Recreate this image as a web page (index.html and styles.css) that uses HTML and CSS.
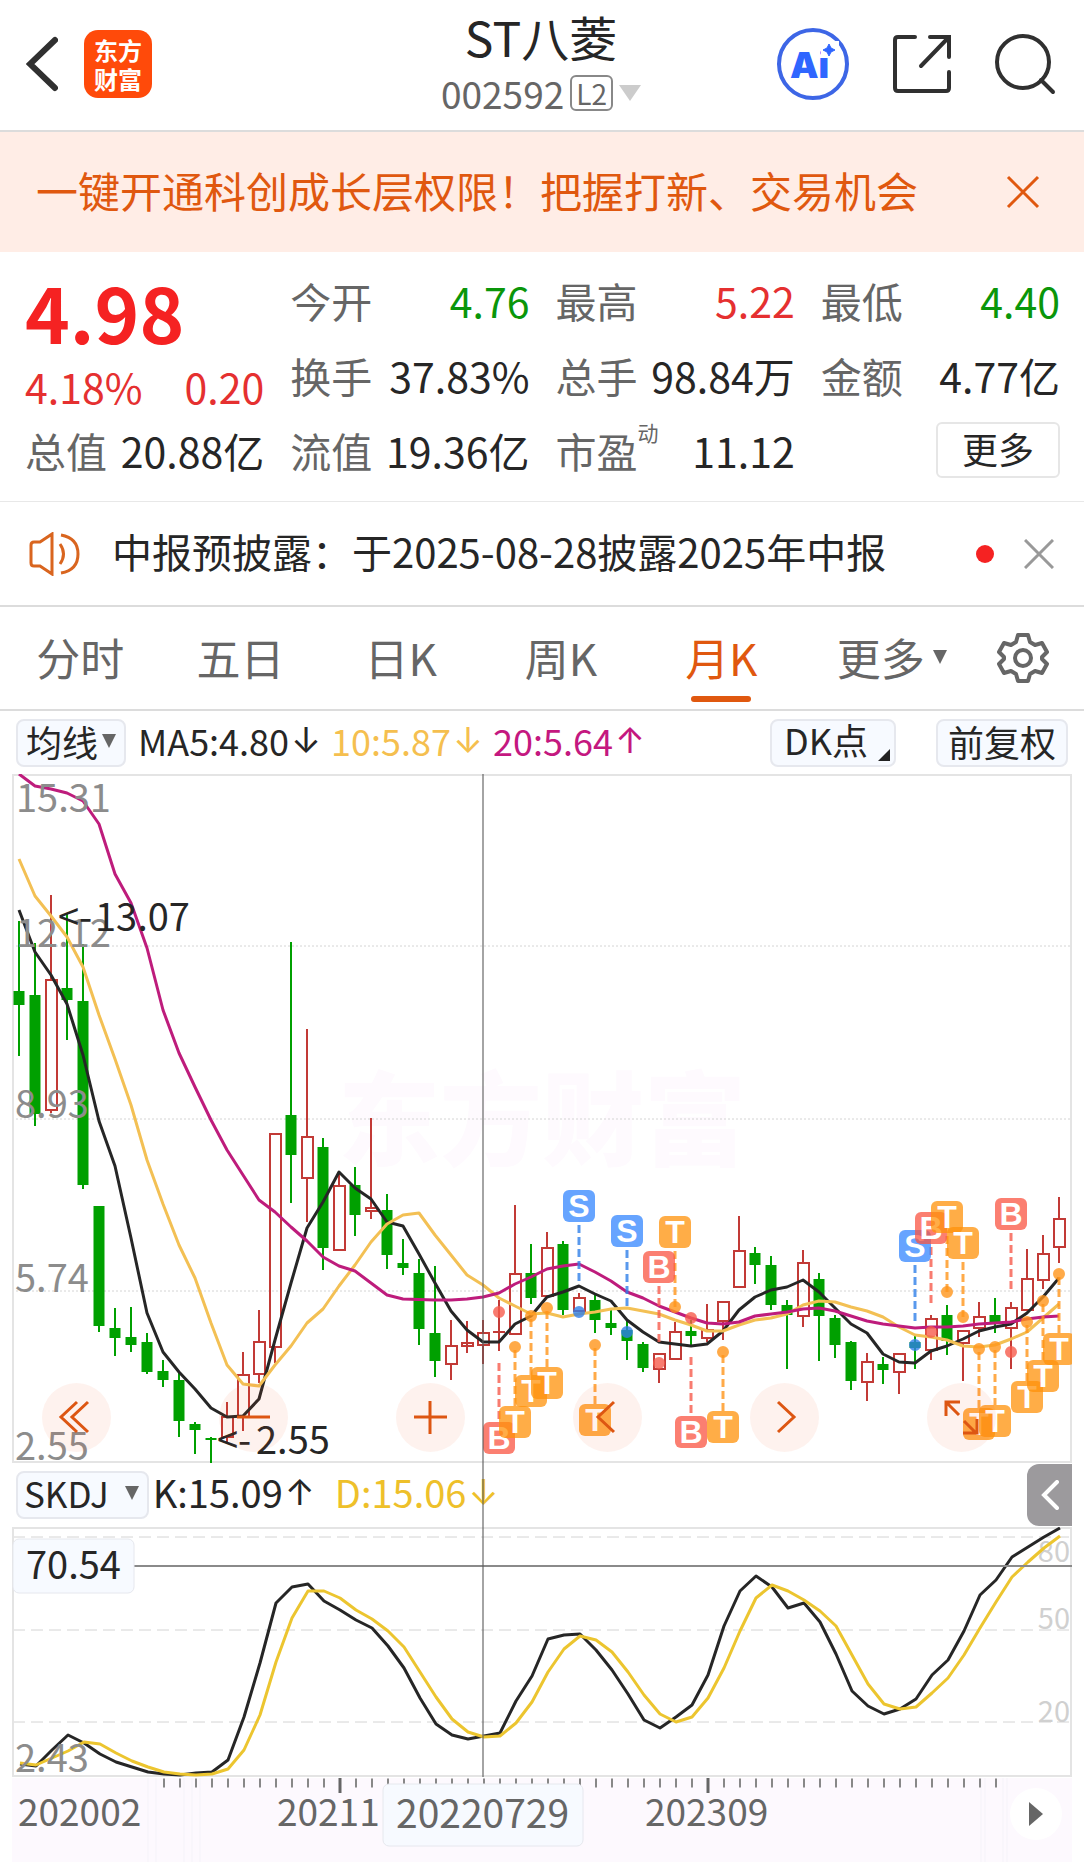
FILE: index.html
```html
<!DOCTYPE html>
<html lang="zh-CN">
<head>
<meta charset="utf-8">
<meta name="viewport" content="width=device-width, initial-scale=1">
<title>ST八菱 002592</title>
<link rel="stylesheet" href="styles.css">
</head>
<body>
<header class="top">
  <div class="top-left">
    <button class="icon-btn" aria-label="返回"><svg width="32" height="56" viewBox="0 0 32 56"><path class="ink" d="M29 4 4 28l25 24"/></svg></button>
    <a class="logo" href="#"><span>东方</span><span>财富</span></a>
  </div>
  <div class="top-title">
    <h1>ST八菱</h1>
    <p class="code">002592<span class="level">L2</span><svg width="22" height="16" viewBox="0 0 22 16"><path fill="#ccc" d="M0 0h22L11 16z"/></svg></p>
  </div>
  <div class="top-right">
    <button class="icon-btn" aria-label="Ai">
      <svg width="74" height="74" viewBox="0 0 74 74"><circle cx="37" cy="37" r="34" fill="none" stroke="#3d66e6" stroke-width="4"/><text class="ai" x="14" y="51">Ai</text><path fill="#fff" d="M45 14h18v16H45z"/><path d="M53 17l2 4 4 2-4 2-2 4-2-4-4-2 4-2z" fill="#2f66ff" stroke="#2f66ff" stroke-width="1"/></svg>
    </button>
    <button class="icon-btn" aria-label="分享"><svg width="60" height="60" viewBox="0 0 60 60"><path class="ink thin" d="M23 3H6q-3 0-3 3v48q0 3 3 3h48q3 0 3-3V38M38 3h19v20M56 4 29 32"/></svg></button>
    <button class="icon-btn" aria-label="搜索"><svg width="62" height="62" viewBox="0 0 62 62"><circle class="ink thin" cx="29" cy="29" r="26"/><path class="ink thin" d="M47 47l12 12"/></svg></button>
  </div>
</header>

<section class="banner">
  <a href="#">一键开通科创成长层权限！把握打新、交易机会</a>
  <button class="icon-btn" aria-label="关闭"><svg width="34" height="34" viewBox="0 0 34 34"><path d="M2 2l30 30M32 2 2 32" stroke="#e0580f" stroke-width="3"/></svg></button>
</section>

<section class="quote">
  <div class="price">
    <strong>4.98</strong>
    <div class="change"><span>4.18%</span><span>0.20</span></div>
  </div>
  <dl class="cell"><dt>今开</dt><dd class="down">4.76</dd></dl>
  <dl class="cell"><dt>最高</dt><dd class="up">5.22</dd></dl>
  <dl class="cell"><dt>最低</dt><dd class="down">4.40</dd></dl>
  <dl class="cell"><dt>换手</dt><dd>37.83%</dd></dl>
  <dl class="cell"><dt>总手</dt><dd>98.84万</dd></dl>
  <dl class="cell"><dt>金额</dt><dd>4.77亿</dd></dl>
  <dl class="cell"><dt>总值</dt><dd>20.88亿</dd></dl>
  <dl class="cell"><dt>流值</dt><dd>19.36亿</dd></dl>
  <dl class="cell"><dt>市盈<sup>动</sup></dt><dd>11.12</dd></dl>
  <button class="more">更多</button>
</section>

<section class="notice">
  <svg width="52" height="44" viewBox="0 0 52 44" fill="none" stroke="#d9651f" stroke-width="3"><path d="M12 10H6q-3 0-3 3v18q0 3 3 3h6l12 8V2zM32 12q7 10 0 20M33 3q17 3 17 19T33 41"/></svg>
  <a href="#">中报预披露：于2025-08-28披露2025年中报</a>
  <i class="dot"></i>
  <button class="icon-btn" aria-label="关闭"><svg width="30" height="30" viewBox="0 0 30 30"><path d="M1 1l28 28M29 1 1 29" stroke="#999" stroke-width="3"/></svg></button>
</section>

<nav class="tabs">
  <a href="#">分时</a>
  <a href="#">五日</a>
  <a href="#">日K</a>
  <a href="#">周K</a>
  <a href="#" class="active">月K</a>
  <a href="#">更多<svg width="14" height="14" viewBox="0 0 14 14"><path fill="#666" d="M0 0h14L7 14z"/></svg></a>
  <button class="icon-btn" aria-label="设置"><svg width="52" height="52" viewBox="0 0 52 52" fill="none" stroke="#666" stroke-width="4" stroke-linejoin="round"><path d="M21 3h10l2 7 5 3 7-2 5 9-5 5v2l5 5-5 9-7-2-5 3-2 7H21l-2-7-5-3-7 2-5-9 5-5v-2l-5-5 5-9 7 2 5-3z"/><circle cx="26" cy="26" r="8"/></svg></button>
</nav>

<main class="chart">
  <div class="bar">
    <button class="chip">均线<svg width="14" height="14" viewBox="0 0 14 14"><path fill="#666" d="M0 0h14L7 14z"/></svg></button>
    <span class="ma5">MA5:4.80<b>↓</b></span>
    <span class="ma10">10:5.87<b>↓</b></span>
    <span class="ma20">20:5.64<b>↑</b></span>
    <button class="chip corner">DK点<svg width="12" height="12" viewBox="0 0 12 12"><path fill="#222" d="M12 0v12H0z"/></svg></button>
    <button class="chip">前复权</button>
  </div>

  <div class="plots">
    <div class="plot">
      <svg class="graph" viewBox="12 774 1060 689" role="img" aria-label="月K线">
        <text class="watermark" x="338" y="1158">东方财富</text>
        <path class="grid-dot" d="M12 946H1072M12 1119H1072M12 1291H1072"/>
        <path class="frame" d="M13 775H1071V1462H13z"/>

        <path class="wick g" d="M19 921V1056M35 943V1126M67 913V1040M83 944V1189M99 1206V1332M115 1308V1356M131 1307V1352M147 1333V1374M163 1360V1387M179 1372V1437M195 1422V1454M211 1437V1464M291 942V1203M323 1138V1270M355 1167V1236M387 1194V1269M403 1239V1275M419 1259V1345M435 1266V1377M531 1244V1304M563 1241V1315M595 1295V1333M611 1310V1335M627 1320V1360M643 1342V1372M691 1320V1346M755 1247V1284M771 1256V1310M787 1300V1369M819 1273V1361M835 1315V1358M851 1341V1390M883 1357V1384M915 1335V1369M947 1305V1355M995 1298V1333"/>
        <path class="body g" d="M19 991V1005M35 995V1114M67 988V1000M83 1001V1185M99 1206V1326M115 1328V1338M131 1337V1345M147 1342V1372M163 1371V1380M179 1380V1421M195 1424V1430M211 1438V1440M291 1115V1155M323 1147V1248M355 1185V1215M387 1210V1255M403 1263V1268M419 1273V1329M435 1333V1361M531 1273V1298M563 1244V1310M595 1300V1320M611 1323V1328M627 1330V1341M643 1344V1368M691 1331V1336M755 1253V1265M771 1265V1305M787 1305V1315M819 1279V1316M835 1318V1345M851 1342V1381M883 1364V1370M915 1342V1348M947 1315V1341M995 1315V1323"/>
        <path class="wick r" d="M51 895V979M51 1110V1113M227 1402V1416M227 1437V1442M243 1352V1374M243 1417V1431M259 1310V1341M259 1374V1383M275 1347V1363M307 1029V1136M307 1179V1222M339 1174V1185M371 1118V1207M371 1212V1219M451 1320V1345M451 1364V1380M467 1321V1353M483 1320V1332M483 1345V1364M499 1300V1351M493 1332H505M515 1205V1273M547 1232V1247M579 1293V1297M659 1369V1383M675 1322V1331M707 1304V1329M707 1338V1342M723 1322V1340M739 1216V1250M803 1250V1262M803 1317V1327M867 1353V1361M867 1382V1401M899 1372V1394M931 1315V1318M931 1350V1360M963 1343V1381M979 1302V1316M979 1328V1337M1011 1302V1307M1011 1328V1369M1027 1249V1278M1043 1235V1253M1043 1280V1289M1059 1197V1218M1059 1247V1263"/>
        <path class="box r" d="M46 980h11v130h-11zM222 1417h11v20h-11zM238 1375h11v42h-11zM254 1342h11v32h-11zM270 1134h11v213h-11zM302 1137h11v41h-11zM334 1186h11v64h-11zM366 1208h11v3h-11zM446 1346h11v18h-11zM462 1343h11v3h-11zM478 1333h11v12h-11zM510 1274h11v60h-11zM542 1248h11v48h-11zM574 1298h11v13h-11zM654 1354h11v15h-11zM670 1332h11v27h-11zM702 1330h11v8h-11zM718 1302h11v19h-11zM734 1251h11v36h-11zM798 1263h11v53h-11zM862 1362h11v20h-11zM894 1354h11v18h-11zM926 1319h11v31h-11zM958 1331h11v12h-11zM974 1317h11v11h-11zM1006 1308h11v20h-11zM1022 1279h11v31h-11zM1038 1254h11v26h-11zM1054 1219h11v28h-11z"/>

        <polyline class="line k" points="19,910 35,952 51,975 67,1004 83,1055 99,1121 115,1166 131,1238 147,1313 163,1352 179,1372 195,1389 211,1408 227,1417 243,1416 259,1399 275,1340 291,1283 307,1228 323,1202 339,1172 355,1188 371,1199 387,1222 403,1226 419,1254 435,1283 451,1311 467,1330 483,1342 499,1342 515,1324 531,1316 547,1297 563,1292 579,1286 595,1294 611,1301 627,1320 643,1332 659,1342 675,1344 691,1346 707,1344 723,1331 739,1310 755,1297 771,1290 787,1287 803,1280 819,1292 835,1308 851,1324 867,1333 883,1354 899,1362 915,1363 931,1351 947,1346 963,1339 979,1331 995,1327 1011,1324 1027,1313 1043,1297 1059,1278"/>
        <polyline class="line y" points="19,859 35,896 51,916 67,937 83,967 99,1015 115,1059 131,1105 147,1160 163,1204 179,1245 195,1278 211,1323 227,1365 243,1384 259,1386 275,1365 291,1346 307,1323 323,1309 339,1286 355,1265 371,1242 387,1224 403,1215 419,1213 435,1235 451,1255 467,1275 483,1285 499,1298 515,1306 531,1314 547,1313 563,1317 579,1314 595,1312 611,1309 627,1308 643,1311 659,1314 675,1320 691,1325 707,1331 723,1331 739,1325 755,1320 771,1318 787,1314 803,1305 819,1301 835,1302 851,1307 867,1311 883,1317 899,1327 915,1335 931,1337 947,1340 963,1346 979,1347 995,1345 1011,1339 1027,1332 1043,1318 1059,1304"/>
        <polyline class="line m" points="19,774 35,786 51,789 67,793 83,801 99,824 115,874 131,903 147,948 163,1010 179,1053 195,1087 211,1120 227,1150 243,1175 259,1200 275,1212 291,1227 307,1241 323,1257 339,1266 355,1271 371,1283 387,1295 403,1299 435,1300 451,1300 467,1299 483,1297 499,1293 515,1284 531,1277 547,1269 563,1266 579,1264 595,1272 611,1281 627,1292 643,1298 659,1306 675,1312 691,1318 707,1323 723,1324 739,1322 755,1316 771,1314 787,1312 803,1309 819,1308 835,1311 851,1316 867,1321 883,1324 899,1326 915,1328 931,1327 947,1327 963,1326 979,1324 995,1323 1011,1322 1027,1319 1043,1317 1059,1316"/>

        <g class="axis">
          <text x="16" y="812">15.31</text><text x="16" y="947">12.12</text><text x="15" y="1118">8.93</text><text x="15" y="1292">5.74</text><text x="15" y="1460">2.55</text>
        </g>
        <text class="peak" x="58" y="931">&lt;-</text><text class="peak" x="95" y="931">13.07</text>
        <text class="peak" x="217" y="1454">&lt;-</text><text class="peak" x="256" y="1454">2.55</text>

        <path class="lead red" d="M499 1363V1422M659 1286V1342M691 1357V1416M931 1247V1303M1011 1233V1290"/>
        <path class="lead orange" d="M515 1350V1406M531 1319V1375M547 1311V1367M675 1251V1307M595 1348V1404M723 1355V1411M947 1236V1292M963 1262V1317M979 1352V1408M995 1350V1405M1027 1325V1381M1043 1304V1360M1059 1277V1333"/>
        <path class="lead blue" d="M579 1225V1285M627 1250V1306M915 1265V1322"/>
        <path class="pin red" d="M499 1312h0M659 1363h0M691 1318h0M931 1332h0M1011 1352h0"/>
        <path class="pin orange" d="M515 1347h0M531 1316h0M547 1308h0M595 1345h0M675 1307h0M723 1352h0M947 1292h0M963 1317h0M979 1349h0M995 1347h0M1027 1322h0M1043 1301h0M1059 1274h0"/>
        <path class="pin blue" d="M579 1312h0M627 1332h0M915 1345h0"/>

        <g class="mark">
          <g class="b"><rect x="483" y="1422" width="32" height="32" rx="6"/><text x="499" y="1449">B</text></g>
          <g class="t"><rect x="499" y="1406" width="32" height="32" rx="6"/><text x="515" y="1433">T</text></g>
          <g class="t"><rect x="515" y="1375" width="32" height="32" rx="6"/><text x="531" y="1402">T</text></g>
          <g class="t"><rect x="531" y="1367" width="32" height="32" rx="6"/><text x="547" y="1394">T</text></g>
          <g class="s"><rect x="563" y="1190" width="32" height="32" rx="6"/><text x="579" y="1217">S</text></g>
          <g class="t"><rect x="579" y="1404" width="32" height="32" rx="6"/><text x="595" y="1431">T</text></g>
          <g class="s"><rect x="611" y="1215" width="32" height="32" rx="6"/><text x="627" y="1242">S</text></g>
          <g class="b"><rect x="643" y="1251" width="32" height="32" rx="6"/><text x="659" y="1278">B</text></g>
          <g class="t"><rect x="659" y="1216" width="32" height="32" rx="6"/><text x="675" y="1243">T</text></g>
          <g class="b"><rect x="675" y="1416" width="32" height="32" rx="6"/><text x="691" y="1443">B</text></g>
          <g class="t"><rect x="707" y="1411" width="32" height="32" rx="6"/><text x="723" y="1438">T</text></g>
          <g class="s"><rect x="899" y="1230" width="32" height="32" rx="6"/><text x="915" y="1257">S</text></g>
          <g class="b"><rect x="915" y="1212" width="32" height="32" rx="6"/><text x="931" y="1239">B</text></g>
          <g class="t"><rect x="931" y="1201" width="32" height="32" rx="6"/><text x="947" y="1228">T</text></g>
          <g class="t"><rect x="947" y="1227" width="32" height="32" rx="6"/><text x="963" y="1254">T</text></g>
          <g class="t"><rect x="963" y="1408" width="32" height="32" rx="6"/><text x="979" y="1435">T</text></g>
          <g class="t"><rect x="979" y="1405" width="32" height="32" rx="6"/><text x="995" y="1432">T</text></g>
          <g class="b"><rect x="995" y="1198" width="32" height="32" rx="6"/><text x="1011" y="1225">B</text></g>
          <g class="t"><rect x="1011" y="1381" width="32" height="32" rx="6"/><text x="1027" y="1408">T</text></g>
          <g class="t"><rect x="1027" y="1360" width="32" height="32" rx="6"/><text x="1043" y="1387">T</text></g>
          <g class="t"><rect x="1043" y="1333" width="32" height="32" rx="6"/><text x="1059" y="1360">T</text></g>
        </g>
      </svg>
      <div class="controls">
        <button aria-label="最早"><svg viewBox="0 0 69 69"><path d="M35 19 19 34l16 15M46 19 30 34l16 15"/></svg></button>
        <button aria-label="缩小"><svg viewBox="0 0 69 69"><path d="M18 34h33"/></svg></button>
        <button aria-label="放大"><svg viewBox="0 0 69 69"><path d="M18 34h33M34 18v33"/></svg></button>
        <button aria-label="向左"><svg viewBox="0 0 69 69"><path d="M41 19 25 34l16 15"/></svg></button>
        <button aria-label="向右"><svg viewBox="0 0 69 69"><path d="M28 19l16 15-16 15"/></svg></button>
        <button aria-label="全屏"><svg viewBox="0 0 69 69"><path d="M19 33V19h14M20 20l12 12M37 38l12 12M36 50h14V36"/></svg></button>
      </div>
    </div>

    <div class="bar sub">
      <button class="chip wide">SKDJ<svg width="14" height="14" viewBox="0 0 14 14"><path fill="#666" d="M0 0h14L7 14z"/></svg></button>
      <span class="ma5">K:15.09<b>↑</b></span>
      <span class="d">D:15.06<b>↓</b></span>
      <button class="drawer" aria-label="展开"><svg width="18" height="30" viewBox="0 0 18 30"><path d="M16 2 3 15l13 13" fill="none" stroke="#fff" stroke-width="4" stroke-linecap="round"/></svg></button>
    </div>

    <svg class="graph" viewBox="12 1527 1060 250" role="img" aria-label="SKDJ">
      <path class="grid-dash" d="M13 1537H1072M13 1630H1072M13 1722H1072"/>
      <path class="frame" d="M13 1528H1071V1776H13z"/>
      <g class="scale"><text x="1070" y="1562">80</text><text x="1070" y="1629">50</text><text x="1070" y="1722">20</text></g>
      <polyline class="line k" points="20,1764 36,1766 52,1750 68,1735 84,1743 100,1754 116,1762 132,1767 148,1772 164,1774 180,1775 196,1773 212,1772 228,1760 244,1717 260,1663 276,1603 292,1587 308,1584 324,1601 340,1610 356,1620 372,1628 388,1646 404,1668 420,1698 436,1724 452,1735 468,1739 484,1736 500,1733 516,1701 532,1676 548,1639 564,1635 580,1634 596,1650 612,1670 628,1694 644,1720 660,1728 676,1717 692,1705 708,1675 724,1626 740,1591 756,1576 772,1587 788,1608 804,1603 820,1622 836,1654 852,1691 868,1706 884,1714 900,1709 916,1699 932,1675 948,1660 964,1631 980,1595 996,1580 1012,1557 1028,1547 1044,1537 1060,1528"/>
      <polyline class="line d" points="20,1763 36,1765 52,1758 68,1751 84,1742 100,1744 116,1753 132,1761 148,1767 164,1772 180,1774 196,1775 212,1774 228,1769 244,1750 260,1715 276,1662 292,1618 308,1591 324,1591 340,1598 356,1610 372,1619 388,1631 404,1647 420,1672 436,1697 452,1719 468,1732 484,1737 500,1736 516,1723 532,1702 548,1672 564,1649 580,1636 596,1640 612,1652 628,1672 644,1695 660,1714 676,1722 692,1717 708,1698 724,1668 740,1631 756,1598 772,1585 788,1591 804,1600 820,1611 836,1626 852,1655 868,1684 884,1704 900,1709 916,1707 932,1693 948,1678 964,1655 980,1628 996,1602 1012,1577 1028,1562 1044,1548 1060,1536"/>
      <g class="axis"><text x="15" y="1772">2.43</text></g>
      <path d="M134 1566H1072" stroke="#8a8a8a" stroke-width="2"/>
      <rect class="tag" x="13" y="1539" width="121" height="54" rx="6"/>
      <text class="peak" x="26" y="1579">70.54</text>
    </svg>
    <div class="crosshair"></div>
  </div>

  <svg class="graph" viewBox="12 1777 1060 85" role="img" aria-label="日期轴">
    <path fill="#fdf9fe" d="M12 1778H1072V1862H12z"/>
    <path d="M148 1778V1862M156 1778V1862M184 1778V1862M192 1778V1862M200 1778V1862M981 1778V1862M985 1778V1862M1003 1778V1862M1007 1778V1862" stroke="#f5f3f9" stroke-width="1"/>
    <path d="M163 1783H998" stroke="#888" stroke-width="9" stroke-dasharray="2 14"/>
    <path d="M340 1778V1793M708 1778V1793" stroke="#666" stroke-width="3"/>
    <g class="date"><text x="18" y="1826">202002</text><text x="277" y="1826">20211</text><text x="645" y="1826">202309</text></g>
    <rect class="tag" x="383" y="1784" width="200" height="62" rx="6"/>
    <text class="date now" x="396" y="1828">20220729</text>
    <circle cx="1036" cy="1814" r="26" fill="#fff"/>
    <path fill="#666" d="M1029 1802l14 12-14 12z"/>
  </svg>
</main>
</body>
</html>
```
FILE: styles.css
```css
* { box-sizing: border-box; }
body {
  margin: 0;
  background: #fff;
  color: #262626;
  font-family: "Noto Sans CJK SC", "Noto Sans", sans-serif;
}
h1, p, dl, dd { margin: 0; font-weight: 400; }
a { color: inherit; text-decoration: none; }
button { font: inherit; color: inherit; padding: 0; border: 0; background: none; }
svg { display: block; flex: none; }
.icon-btn { display: flex; align-items: center; justify-content: center; }
.ink { fill: none; stroke: #303030; stroke-width: 6; stroke-linecap: round; }
.ink.thin { stroke-width: 4; }

.top {
  display: grid;
  grid-template-columns: 1fr auto 1fr;
  align-items: center;
  height: 132px;
  padding: 0 28px 2px 26px;
  border-bottom: 2px solid #dcdcdc;
}
.top-left { display: flex; align-items: center; gap: 26px; }
.logo {
  display: flex;
  flex-direction: column;
  align-items: center;
  justify-content: center;
  width: 68px;
  height: 68px;
  border-radius: 14px;
  background: #ff4a0a;
  color: #fff;
  font-size: 24px;
  font-weight: 700;
  line-height: 29px;
}
.top-title { padding-bottom: 4px; text-align: center; }
.top-title h1 { font-size: 48px; line-height: 62px; }
.code {
  display: flex;
  align-items: center;
  justify-content: center;
  gap: 6px;
  color: #666;
  font-size: 37px;
  line-height: 52px;
}
.level {
  padding: 0 4px;
  border: 2px solid #888;
  border-radius: 6px;
  font-size: 28px;
  line-height: 32px;
}
.top-right { display: flex; align-items: center; justify-content: flex-end; gap: 42px; }
.ai { fill: #2f66ff; font: 900 36px Inter, sans-serif; }

.banner {
  display: flex;
  align-items: center;
  justify-content: space-between;
  height: 120px;
  padding: 0 44px 0 36px;
  background: #ffede6;
  color: #e0580f;
  font-size: 42px;
}
.banner a { padding-bottom: 6px; }

.quote {
  display: grid;
  grid-template-columns: repeat(4, 1fr);
  grid-template-rows: repeat(3, 75px);
  column-gap: 26px;
  align-items: center;
  padding: 10px 24px 14px 25px;
  border-bottom: 1px solid #e8e8e8;
  font-size: 41px;
  line-height: 60px;
}
.price { grid-row: 1 / 3; padding-top: 8px; color: #e53030; }
.price strong { display: block; color: #f52222; font-size: 76px; line-height: 90px; }
.change { display: flex; justify-content: space-between; }
.cell { display: flex; justify-content: space-between; white-space: nowrap; }
.cell dt { position: relative; color: #666; }
.cell sup { position: absolute; left: 100%; top: 0; font-size: 21px; line-height: 24px; }
.up { color: #e53030; }
.down { color: #0a960a; }
.more {
  justify-self: end;
  width: 124px;
  height: 56px;
  padding-bottom: 4px;
  border: 2px solid #e6e6e6;
  border-radius: 6px;
  font-size: 36px;
  line-height: 48px;
}

.notice {
  display: flex;
  align-items: center;
  height: 105px;
  padding: 0 30px 0 28px;
  border-bottom: 2px solid #dcdcdc;
  font-size: 40px;
}
.notice a { flex: 1; margin-left: 32px; padding-bottom: 6px; }
.dot { width: 18px; height: 18px; margin-right: 30px; border-radius: 50%; background: #f52222; }

.tabs {
  display: grid;
  grid-template-columns: repeat(5, 160fr) 180fr 82fr;
  align-items: stretch;
  height: 104px;
  padding-right: 20px;
  border-bottom: 2px solid #dcdcdc;
  color: #666;
  font-size: 44px;
}
.tabs a { position: relative; display: flex; align-items: center; justify-content: center; gap: 8px; padding-bottom: 2px; }
.tabs .active { color: #e0580f; }
.tabs .active::after {
  content: "";
  position: absolute;
  bottom: 7px;
  width: 60px;
  height: 6px;
  border-radius: 3px;
  background: #e0580f;
}

.chart { padding: 0 12px; }
.bar { display: flex; align-items: center; height: 63px; padding: 0 4px; font-size: 36px; line-height: 44px; }
.bar span { display: flex; margin-left: 8px; padding-bottom: 6px; white-space: nowrap; }
.bar .ma5 { margin-left: 12px; }
.bar b { width: 34px; font: 400 36px/44px Inter, sans-serif; text-align: center; }
.ma10 { color: #f5bf4f; }
.ma20 { color: #c4187f; }
.chip {
  display: flex;
  align-items: center;
  justify-content: center;
  gap: 4px;
  height: 48px;
  padding: 0 8px 4px;
  border: 2px solid #e6e8ee;
  border-radius: 8px;
  background: #f7faff;
}
.chip.corner { align-items: flex-end; gap: 10px; margin-left: auto; margin-right: 40px; padding: 0 4px 4px 12px; }
.bar .chip:last-child { padding: 0 10px 4px; }
.bar.sub { height: 64px; font-size: 38px; }
.bar.sub span { margin-left: 4px; }
.bar.sub .d { margin-left: 18px; }
.chip.wide { gap: 16px; padding: 0 8px 4px 6px; font-size: 35px; }
.d { color: #eec02a; }
.drawer {
  display: flex;
  align-items: center;
  justify-content: center;
  width: 45px;
  height: 62px;
  margin-left: auto;
  margin-right: -4px;
  border-radius: 12px 0 0 12px;
  background: #9c9a9d;
}

.plots, .plot { position: relative; }
.graph { width: 100%; height: auto; overflow: hidden; }
.graph text { font-family: "Noto Sans CJK SC", "Noto Sans", sans-serif; }
.crosshair { position: absolute; top: 0; bottom: 0; left: 44.3%; width: 2px; background: rgba(90, 90, 90, .55); }
.frame { fill: none; stroke: #e4e4e4; stroke-width: 2; }
.grid-dot { stroke: #d4d4d4; stroke-width: 1; stroke-dasharray: 2 2; }
.grid-dash { stroke: #d4d4d4; stroke-width: 1; stroke-dasharray: 12 6; }
.watermark { fill: #fefafe; font-size: 102px; font-weight: 900; }
.wick { fill: none; stroke-width: 2; }
.body { fill: none; stroke-width: 11; }
.box { fill: none; stroke-width: 2; }
.g { stroke: #00a000; }
.r { stroke: #c23a36; }
.line { fill: none; stroke-width: 3; stroke-linejoin: round; }
.line.k { stroke: #262626; }
.line.y { stroke: #f3c054; }
.line.m { stroke: #be1c7c; }
.line.d { stroke: #ecc52f; }
.axis { fill: #8c8c8c; font-size: 38px; }
.peak { fill: #262626; font-size: 38px; }
.scale { fill: #d0d0d0; font-size: 29px; text-anchor: end; }
.date { fill: #666; font-size: 37px; }
.date.now { font-size: 39px; }
.tag { fill: #f7faff; stroke: #e6e8ee; stroke-width: 1; }
.lead { fill: none; stroke-width: 3; stroke-dasharray: 8 4; opacity: .8; }
.pin { fill: none; stroke-width: 12; stroke-linecap: round; opacity: .8; }
.red { stroke: #f65b4c; }
.orange { stroke: #ff951a; }
.blue { stroke: #2f7fe8; }
.mark rect { opacity: .75; }
.graph .mark text { fill: #fff; font: 700 32px "Liberation Sans", Arial, sans-serif; text-anchor: middle; }
.mark .b { fill: #fa5441; }
.mark .t { fill: #ff920a; }
.mark .s { fill: #3385ff; }
.controls {
  position: absolute;
  left: 30px;
  right: 76px;
  bottom: 11px;
  display: flex;
  justify-content: space-between;
}
.controls button { width: 69px; height: 69px; border-radius: 50%; background: rgba(240, 90, 40, .08); }
.controls path { fill: none; stroke: #dd5612; stroke-width: 3; }
```
